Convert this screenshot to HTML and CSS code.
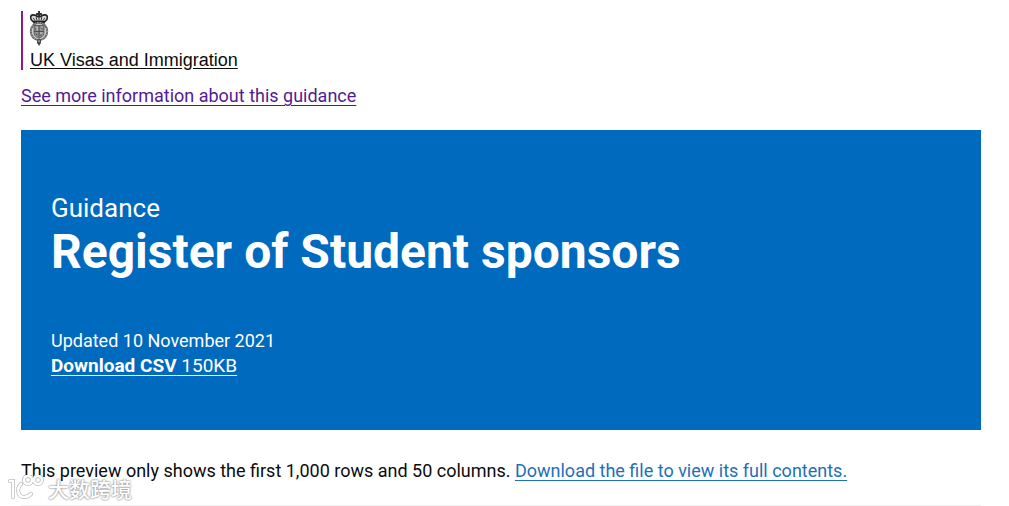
FILE: index.html
```
<!DOCTYPE html>
<html lang="en">
<head>
  <meta charset="UTF-8">
  <meta name="viewport" content="width=device-width, initial-scale=1">
  <title>Register of Student sponsors</title>
  <link rel="stylesheet" href="styles.css">
</head>
<body>
  <div class="container">
    <header class="page-header">
      <a class="organisation" href="#">
        <svg class="crest" viewBox="0 0 20 36" aria-hidden="true">
          <!-- crown -->
          <path d="M9 0h2v2h2v2h-2v2H9V4H7V2h2z" fill="#333"/>
          <path d="M4 11C0 8 1 4 4 4c3 0 4 2 6 2s3-2 6-2c3 0 4 4 0 7z" fill="#ddd" stroke="#222" stroke-width="1.6"/>
          <path d="M7 6l1 4M13 6l-1 4M10 5v6M4 7l2 3M16 7l-2 3" stroke="#333" fill="none"/>
          <path d="M4 10h12v3H4z" fill="#222"/>
          <!-- garter and shield -->
          <ellipse cx="10" cy="21" rx="8.5" ry="9" fill="#ccc" stroke="#666" stroke-width="2"/>
          <ellipse cx="10" cy="21" rx="8.5" ry="9" fill="none" stroke="#ccc" stroke-width="1" stroke-dasharray="1 2"/>
          <path d="M5 15h10v8c0 3-3 4-5 5-2-1-5-2-5-5z" fill="#999" stroke="#555"/>
          <path d="M10 15v12M5 21h10M7 17v3M12 17l2 2M7 23l1 2M12 23v3" stroke="#444" fill="none"/>
          <path d="M8 16v4M13 16v1M12 22v2" stroke="#ddd" fill="none"/>
          <!-- buckle -->
          <path d="M8 29h4v4l-2 3-2-3z" fill="#444"/>
          <path d="M10 30v2" stroke="#ddd"/>
        </svg>
        <span class="organisation-name">UK Visas and Immigration</span>
      </a>
      <a class="more-link" href="#">See more information about this guidance</a>
    </header>

    <main>
      <section class="banner">
        <p class="context">Guidance</p>
        <h1>Register of Student sponsors</h1>
        <p class="updated">Updated 10 November 2021</p>
        <a class="download" href="#"><strong>Download CSV</strong> 150KB</a>
      </section>
      <p class="preview">This preview only shows the first 1,000 rows and 50 columns. <a href="#">Download the file to view its full contents.</a></p>
      <hr>
    </main>
  </div>

  <div class="watermark">
    <svg class="watermark-logo" viewBox="0 0 38 26" aria-hidden="true">
      <g fill="none" stroke="#bbb" stroke-width="4" stroke-linecap="round">
        <path d="M2 6h3v16M13 9c-5 5-3 13 3 13 3 0 5-1 7-3"/>
        <circle cx="20" cy="5" r="4"/>
        <circle cx="30" cy="5" r="4"/>
      </g>
      <g fill="none" stroke="#fff" stroke-width="2.5" stroke-linecap="round">
        <path d="M2 6h3v16M13 9c-5 5-3 13 3 13 3 0 5-1 7-3"/>
        <circle cx="20" cy="5" r="4"/>
        <circle cx="30" cy="5" r="4"/>
      </g>
    </svg>
    <span lang="zh-CN">大数跨境</span>
  </div>
</body>
</html>
```
FILE: styles.css
```
* {
  box-sizing: border-box;
  margin: 0;
  padding: 0;
}

body {
  position: relative;
  background: #fff;
  color: #0b0c0c;
  font-family: Roboto, sans-serif;
  font-size: 18px;
  line-height: 25px;
}

a {
  text-underline-offset: 3px;
  text-decoration-thickness: 1px;
}

.container {
  padding: 11px 28px 0 21px;
}

.page-header {
  display: flex;
  flex-direction: column;
  align-items: flex-start;
  gap: 13px;
}

.organisation {
  display: flex;
  flex-direction: column;
  padding-left: 7px;
  border-left: 2px solid #8c1a8c;
  color: #0b0c0c;
  font-family: "Liberation Sans", sans-serif;
  line-height: 20px;
  text-decoration: none;
}

.crest {
  width: 20px;
  height: 35px;
  margin-left: -1px;
  margin-bottom: 4px;
}

.organisation-name {
  text-decoration: underline;
  text-underline-offset: 2px;
}

.more-link {
  color: #541a94;
}

.banner {
  margin-top: 22px;
  padding: 60px 30px 52px;
  background: #006abf;
  color: #fff;
}

.context {
  font-size: 26px;
  line-height: 36px;
}

h1 {
  margin-bottom: 50px;
  font-size: 48px;
  line-height: 52px;
}

.download {
  color: #fff;
  font-size: 19px;
}

.preview {
  padding: 28px 0 22px;
}

.preview a {
  color: #1d70b8;
}

hr {
  border: 0;
  border-top: 1px solid #eee;
}

/* sits over the preview text */
.watermark {
  position: absolute;
  left: 8px;
  bottom: 5px;
  display: flex;
  align-items: center;
  gap: 2px;
  color: #fff;
  font-family: "Noto Sans CJK SC", sans-serif;
  font-size: 21px;
  font-weight: 500;
  line-height: 24px;
  text-shadow: 0 0 2px #888, 0 0 2px #999;
}

.watermark-logo {
  width: 38px;
  height: 26px;
}
```
